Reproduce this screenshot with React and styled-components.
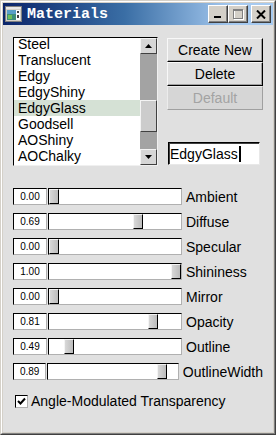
import React from 'react';
import styled, { createGlobalStyle } from 'styled-components';

const GlobalStyle = createGlobalStyle`
  html, body {
    margin: 0;
    padding: 0;
    background: #ffffff;
  }
  * {
    box-sizing: border-box;
  }
`;

const materials = [
  'Steel',
  'Translucent',
  'Edgy',
  'EdgyShiny',
  'EdgyGlass',
  'Goodsell',
  'AOShiny',
  'AOChalky',
];

// offset = thumb position in px inside the track (as drawn)
const sliders = [
  { label: 'Ambient', value: '0.00', offset: 0 },
  { label: 'Diffuse', value: '0.69', offset: 84 },
  { label: 'Specular', value: '0.00', offset: 0 },
  { label: 'Shininess', value: '1.00', offset: 122 },
  { label: 'Mirror', value: '0.00', offset: 0 },
  { label: 'Opacity', value: '0.81', offset: 99 },
  { label: 'Outline', value: '0.49', offset: 15 },
  { label: 'OutlineWidth', value: '0.89', offset: 109 },
];

const App = () => {
  return (
    <>
      <GlobalStyle />
      <Window>
        <WindowInner>
          <TitleBar>
            <AppIcon width="17" height="16" viewBox="0 0 17 16">
              <rect x="0.5" y="0.5" width="16" height="15" fill="#d4d0c8" stroke="#808080" />
              <rect x="1" y="1" width="15" height="2" fill="#e8e8e8" />
              <rect x="2" y="4" width="9" height="10" fill="#3f8f7a" />
              <rect x="2" y="4" width="9" height="4" fill="#5aa0c8" />
              <rect x="3" y="9" width="4" height="4" fill="#6fbf5a" />
              <rect x="11" y="4" width="4" height="10" fill="#ffffff" />
              <rect x="12" y="5" width="2" height="2" fill="#404040" />
              <rect x="12" y="9" width="2" height="3" fill="#404040" />
            </AppIcon>
            <Title>Materials</Title>
            <CaptionButtons>
              <CaptionButton>
                <svg width="8" height="8" viewBox="0 0 8 8">
                  <rect x="0" y="6" width="7" height="2" fill="#000" />
                </svg>
              </CaptionButton>
              <CaptionButton>
                <svg width="11" height="11" viewBox="0 0 11 11">
                  <rect x="1.5" y="1.5" width="9" height="9" fill="none" stroke="#ffffff" />
                  <rect x="0.5" y="0.5" width="9" height="9" fill="none" stroke="#808080" />
                  <rect x="1" y="1" width="8" height="1" fill="#808080" />
                </svg>
              </CaptionButton>
              <CaptionButton $close>
                <svg width="10" height="9" viewBox="0 0 10 9">
                  <path d="M1 0.5 L9 8.5 M9 0.5 L1 8.5" stroke="#000" strokeWidth="2" />
                </svg>
              </CaptionButton>
            </CaptionButtons>
          </TitleBar>

          <Client>
            <TopSection>
              <ListBox>
                <ListItems>
                  {materials.map((name) => (
                    <ListItem key={name} $selected={name === 'EdgyGlass'}>
                      {name}
                    </ListItem>
                  ))}
                </ListItems>
                <ScrollBar>
                  <ScrollButton>
                    <svg width="7" height="4" viewBox="0 0 7 4">
                      <path d="M3.5 0 L7 4 L0 4 Z" fill="#000" />
                    </svg>
                  </ScrollButton>
                  <ScrollTrack>
                    <ScrollThumb />
                  </ScrollTrack>
                  <ScrollButton>
                    <svg width="7" height="4" viewBox="0 0 7 4">
                      <path d="M0 0 L7 0 L3.5 4 Z" fill="#000" />
                    </svg>
                  </ScrollButton>
                </ScrollBar>
              </ListBox>

              <ActionColumn>
                <ActionButton>Create New</ActionButton>
                <ActionButton>Delete</ActionButton>
                <ActionButton disabled>Default</ActionButton>
                <NameField>
                  EdgyGlass
                  <Caret />
                </NameField>
              </ActionColumn>
            </TopSection>

            <SliderList>
              {sliders.map((s) => (
                <SliderRow key={s.label}>
                  <ValueBox>{s.value}</ValueBox>
                  <Track>
                    <Thumb $offset={s.offset} />
                  </Track>
                  <SliderLabel>{s.label}</SliderLabel>
                </SliderRow>
              ))}
            </SliderList>

            <CheckRow>
              <CheckBox>
                <svg width="9" height="9" viewBox="0 0 9 9">
                  <path d="M1 4 L3.5 6.5 L8 1.5" fill="none" stroke="#000" strokeWidth="2" />
                </svg>
              </CheckBox>
              <CheckLabel>Angle-Modulated Transparency</CheckLabel>
            </CheckRow>
          </Client>
        </WindowInner>
      </Window>
    </>
  );
};

const Window = styled.div`
  width: 276px;
  height: 435px;
  display: flex;
  flex-direction: column;
  border: 1px solid;
  border-color: #d4d0c8 #404040 #404040 #d4d0c8;
  background: #d4d0c8;
  font-family: 'Liberation Sans', Arial, sans-serif;
`;

const WindowInner = styled.div`
  flex: 1;
  display: flex;
  flex-direction: column;
  border: 1px solid;
  border-color: #ffffff #808080 #808080 #ffffff;
  padding: 1px;
`;

const TitleBar = styled.div`
  height: 22px;
  display: flex;
  align-items: center;
  padding: 0 2px;
  background: linear-gradient(to right, #0a246a 0%, #3a6ea5 45%, #a6caf0 85%);
`;

const AppIcon = styled.svg`
  flex: none;
`;

const Title = styled.span`
  margin-left: 5px;
  color: #ffffff;
  font-family: 'Liberation Mono', 'Courier New', monospace;
  font-weight: bold;
  font-size: 15px;
  letter-spacing: 0;
`;

const CaptionButtons = styled.div`
  margin-left: auto;
  display: flex;
  gap: 0;
`;

const CaptionButton = styled.div`
  width: 20px;
  height: 18px;
  display: flex;
  align-items: center;
  justify-content: center;
  margin-left: ${(p) => (p.$close ? '3px' : '0')};
  background: #d4d0c8;
  border: 1px solid;
  border-color: #ffffff #404040 #404040 #ffffff;
  box-shadow: inset -1px -1px 0 #808080;
`;

const Client = styled.div`
  flex: 1;
  display: flex;
  flex-direction: column;
  background: #e0e0e0;
  padding: 12px 10px 0 10px;
`;

const TopSection = styled.div`
  display: flex;
  gap: 9px;
  height: 129px;
`;

const ListBox = styled.div`
  width: 145px;
  height: 129px;
  display: flex;
  border: 1px solid;
  border-color: #000000 #f0f0f0 #f0f0f0 #000000;
  background: #ffffff;
  overflow: hidden;
`;

const ListItems = styled.div`
  flex: 1;
  overflow: hidden;
  padding-top: 0;
  & > :first-child {
    margin-top: -2px;
  }
`;

const ListItem = styled.div`
  height: 16px;
  line-height: 16px;
  padding-left: 4px;
  font-size: 14px;
  color: #000000;
  white-space: nowrap;
  background: ${(p) => (p.$selected ? '#d5e1d5' : 'transparent')};
`;

const ScrollBar = styled.div`
  width: 17px;
  display: flex;
  flex-direction: column;
  background: #a3a3a3;
`;

const ScrollButton = styled.div`
  height: 16px;
  display: flex;
  align-items: center;
  justify-content: center;
  background: #d6d6d6;
  border: 1px solid;
  border-color: #f4f4f4 #404040 #404040 #f4f4f4;
`;

const ScrollTrack = styled.div`
  flex: 1;
  padding-top: 46px;
`;

const ScrollThumb = styled.div`
  height: 32px;
  background: #cccccc;
  border: 1px solid;
  border-color: #f4f4f4 #404040 #404040 #f4f4f4;
`;

const ActionColumn = styled.div`
  width: 96px;
  display: flex;
  flex-direction: column;
  padding-top: 1px;
`;

const ActionButton = styled.div`
  height: 24px;
  display: flex;
  align-items: center;
  justify-content: center;
  font-size: 14px;
  color: ${(p) => (p.disabled ? '#a3a3a3' : '#000000')};
  background: ${(p) => (p.disabled ? '#d6d6d6' : '#e0e0e0')};
  border: 1px solid;
  border-color: ${(p) =>
    p.disabled ? '#ececec #a0a0a0 #a0a0a0 #ececec' : '#f8f8f8 #000000 #000000 #f8f8f8'};
  box-shadow: ${(p) => (p.disabled ? 'none' : 'inset -1px -1px 0 #a0a0a0')};
`;

const NameField = styled.div`
  margin-top: 32px;
  margin-left: 1px;
  width: 92px;
  height: 23px;
  display: flex;
  align-items: center;
  padding-left: 1px;
  font-size: 14px;
  color: #000000;
  background: #ffffff;
  border: 1px solid;
  border-color: #000000 #e8e8e8 #e8e8e8 #000000;
  box-shadow: inset 1px 1px 0 #404040;
`;

const Caret = styled.span`
  display: inline-block;
  width: 2px;
  height: 16px;
  margin-left: 1px;
  background: #000000;
`;

const SliderList = styled.div`
  margin-top: 22px;
  display: flex;
  flex-direction: column;
  gap: 8px;
`;

const SliderRow = styled.div`
  height: 17px;
  display: flex;
  align-items: center;
`;

const ValueBox = styled.div`
  width: 34px;
  height: 17px;
  display: flex;
  align-items: center;
  justify-content: center;
  font-size: 10px;
  color: #000000;
  background: #ffffff;
  border: 1px solid;
  border-color: #000000 #b0b0b0 #b0b0b0 #000000;
`;

const Track = styled.div`
  width: 134px;
  height: 17px;
  margin-left: 1px;
  display: flex;
  align-items: flex-start;
  background: #ffffff;
  border: 1px solid;
  border-color: #000000 #b0b0b0 #b0b0b0 #000000;
`;

const Thumb = styled.div`
  width: 10px;
  height: 15px;
  margin-left: ${(p) => p.$offset}px;
  background: linear-gradient(to right, #d8d8d8, #bcbcbc);
  border: 1px solid;
  border-color: #f4f4f4 #000000 #000000 #f4f4f4;
`;

const SliderLabel = styled.span`
  margin-left: 4px;
  font-size: 14px;
  color: #000000;
  white-space: nowrap;
`;

const CheckRow = styled.div`
  margin-top: 13px;
  padding-left: 2px;
  display: flex;
  align-items: center;
  gap: 3px;
`;

const CheckBox = styled.div`
  width: 13px;
  height: 13px;
  display: flex;
  align-items: center;
  justify-content: center;
  background: #ffffff;
  border: 1px solid;
  border-color: #000000 #b0b0b0 #b0b0b0 #000000;
`;

const CheckLabel = styled.span`
  font-size: 14px;
  color: #000000;
  white-space: nowrap;
`;

export default App;
